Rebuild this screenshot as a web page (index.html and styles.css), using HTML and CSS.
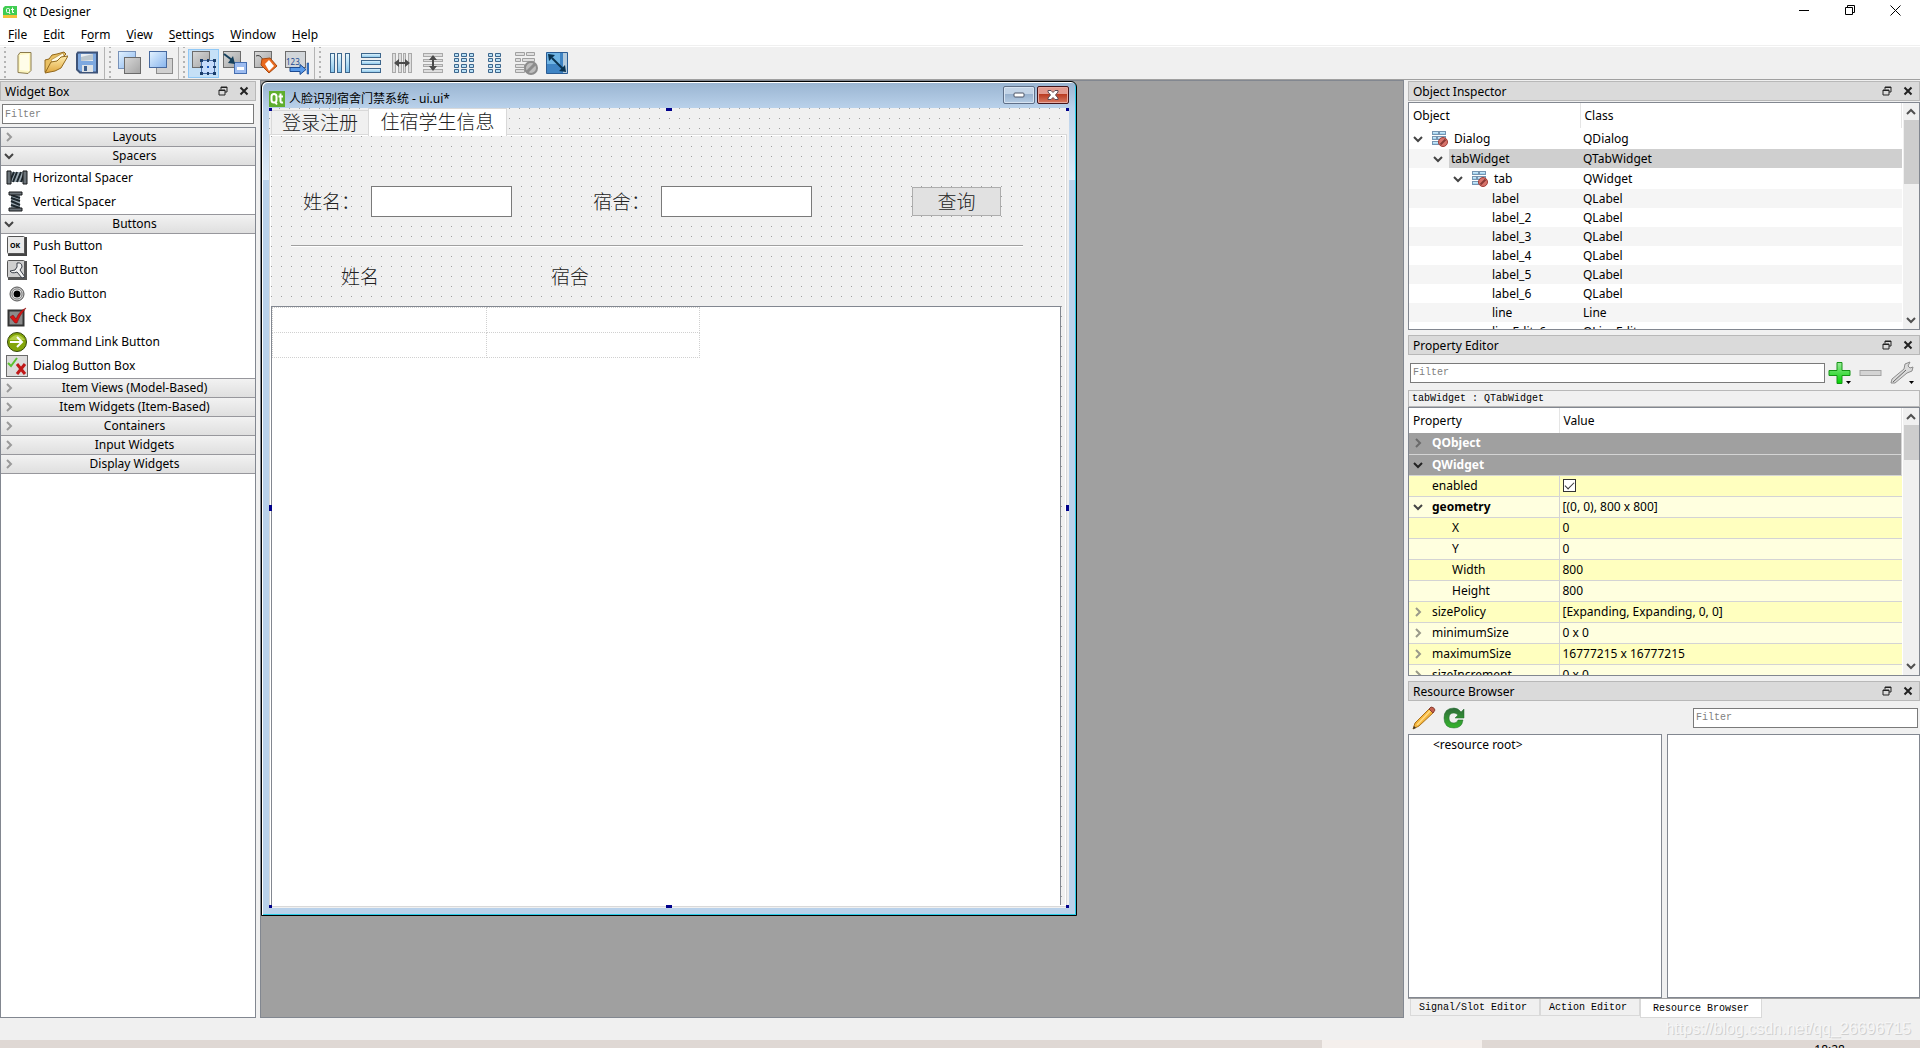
FILE: index.html
```html
<!DOCTYPE html>
<html lang="en">

<head>
    <meta charset="UTF-8">
    <meta name="viewport" content="width=device-width, initial-scale=1.0">
    <title>Qt Designer</title>
    <link rel="stylesheet" href="styles.css">
</head>

<body>
    <!-- shared shapes -->
    <svg class="defs" width="0" height="0">
        <defs>
            <linearGradient id="gBlue" x1="0" y1="0" x2="1" y2="1">
                <stop offset="0" stop-color="#e4f3ff" />
                <stop offset="1" stop-color="#86b4ee" />
            </linearGradient>
            <linearGradient id="gGray" x1="0" y1="0" x2="1" y2="1">
                <stop offset="0" stop-color="#d8d8d8" />
                <stop offset="1" stop-color="#a4a4a4" />
            </linearGradient>
            <linearGradient id="gBar" x1="0" y1="0" x2="0" y2="1">
                <stop offset="0" stop-color="#e6f8ff" />
                <stop offset="1" stop-color="#86c4ea" />
            </linearGradient>
            <linearGradient id="gGreen" x1="0" y1="0" x2="0" y2="1">
                <stop offset="0" stop-color="#9be89b" />
                <stop offset="1" stop-color="#00d400" />
            </linearGradient>
            <linearGradient id="gReload" x1="0" y1="0" x2="0" y2="1">
                <stop offset="0" stop-color="#2f6b3a" />
                <stop offset="1" stop-color="#35b52c" />
            </linearGradient>
            <linearGradient id="gFolder" x1="0" y1="0" x2="0" y2="1">
                <stop offset="0" stop-color="#ffeeb0" />
                <stop offset="1" stop-color="#e0a63c" />
            </linearGradient>
        </defs>
        <symbol id="open" viewBox="0 0 10 10">
            <path d="M1 3l4 4 4-4" fill="none" stroke="currentColor" stroke-width="2" />
        </symbol>
        <symbol id="closed" viewBox="0 0 10 10">
            <path d="M3 1l4 4-4 4" fill="none" stroke="currentColor" stroke-width="2" />
        </symbol>
        <symbol id="up" viewBox="0 0 10 10">
            <path d="M1 7l4-4 4 4" fill="none" stroke="currentColor" stroke-width="2" />
        </symbol>
        <symbol id="float" viewBox="0 0 10 10">
            <path d="M3 3.500V1h6v5H7M3 1.500h6M1 4h6v5H1zM1 4.500h6" fill="none" stroke="currentColor" />
        </symbol>
        <symbol id="cross" viewBox="0 0 10 10">
            <path d="M1.500 1.500l7 7M8.500 1.500l-7 7" fill="none" stroke="currentColor" stroke-width="2" />
        </symbol>
        <symbol id="nolayout" viewBox="0 0 16 16">
            <g fill="url(#gBar)" stroke="#7595b2">
                <rect x=".5" y=".5" width="6" height="3" />
                <rect x="7.500" y=".5" width="6" height="3" />
                <rect x=".5" y="5.500" width="4" height="3" />
                <rect x="5.500" y="5.500" width="8" height="3" />
                <rect x=".5" y="10.500" width="6" height="3" />
            </g>
            <circle cx="11" cy="11" r="4.500" fill="#d8746c" stroke="#a03c36" />
            <path d="M8.500 13.500l5-5" stroke="#8c3a36" stroke-width="2" />
        </symbol>
        <symbol id="qt" viewBox="0 0 16 16">
            <rect width="16" height="16" fill="#5fae2e" />
            <rect x="2.500" y="3" width="5" height="8.500" rx="2.500" fill="none" stroke="#fff" stroke-width="2" />
            <path d="M6 11l2 2.500M11.500 2.500v7.500q0 2 2.500 1.500M9.500 5.500h4.500" fill="none" stroke="#fff" stroke-width="2" />
        </symbol>
    </svg>

    <header class="titlebar">
        <svg width="14" height="14" viewBox="0 0 14 14">
            <path d="M2 1h12v9H0V3z" fill="#41cd52" />
            <rect y="10" width="14" height="3" fill="#f3c13a" />
            <rect x="3.500" y="3.500" width="3" height="4" rx="1" fill="none" stroke="#fff" />
            <path d="M9.500 2.500v5h1.500M8 4.500h3M6 7l1 2" fill="none" stroke="#fff" />
        </svg>
        <span class="app-name">Qt Designer</span>
        <button class="win-btn" aria-label="Minimize"><svg width="11" height="11" viewBox="0 0 11 11"><path d="M0 5.500h10" stroke="#000" /></svg></button>
        <button class="win-btn" aria-label="Restore"><svg width="11" height="11" viewBox="0 0 11 11"><path d="M.5 2.500h7v7h-7zM2.500 2.500v-2h7v7h-2" fill="none" stroke="#000" /></svg></button>
        <button class="win-btn" aria-label="Close"><svg width="11" height="11" viewBox="0 0 11 11"><path d="M.5 .5l10 10M10.500 .5l-10 10" stroke="#000" /></svg></button>
    </header>

    <nav class="menubar">
        <button><u>F</u>ile</button>
        <button><u>E</u>dit</button>
        <button>F<u>o</u>rm</button>
        <button><u>V</u>iew</button>
        <button><u>S</u>ettings</button>
        <button><u>W</u>indow</button>
        <button><u>H</u>elp</button>
    </nav>

    <div class="toolbar">
        <div class="tool-group">
            <button aria-label="New"><svg width="24" height="24" viewBox="0 0 24 24"><path d="M7 1.500h11v18l-3 3-10-1v-17z" fill="#fdf6c0" stroke="#8a7a4c" /><path d="M7 4l9-1v17l-9-1z" fill="#fffde8" /></svg></button>
            <button aria-label="Open"><svg width="24" height="24" viewBox="0 0 24 24"><path d="M1 21V9l4-1 3-4 5-1 7-2 2 2-9 9z" fill="#e9c063" stroke="#92681c" /><path d="M7 9l12-7 1 3L9 13z" fill="#fffbe4" stroke="#92681c" stroke-width=".5" /><path d="M1 22l6-11 6-1 4-4 7-1-7 12-6 3z" fill="url(#gFolder)" stroke="#92681c" /></svg></button>
            <button aria-label="Save"><svg width="24" height="24" viewBox="0 0 24 24"><path d="M3 1.500h19v20H5l-3-3V3z" fill="#7ea9e0" stroke="#3d5378" stroke-width="2" /><path d="M6 3h12v7H6z" fill="#e9eef2" /><path d="M6 6l12-3v6l-12 1z" fill="#bcc7ce" /><path d="M7 14h11v7H7z" fill="#dfe3e6" /><path d="M9 15h3v5H9z" fill="#3d5f8e" /></svg></button>
        </div>
        <div class="tool-group">
            <button aria-label="Send to Back"><svg width="24" height="24" viewBox="0 0 24 24"><rect x=".5" y=".5" width="17" height="17" fill="url(#gBlue)" stroke="#7791b8" /><rect x="6.500" y="6.500" width="16" height="16" fill="url(#gGray)" stroke="#6a6a6a" /></svg></button>
            <button aria-label="Bring to Front"><svg width="24" height="24" viewBox="0 0 24 24"><rect x="7.500" y="7.500" width="16" height="15" fill="#d0d0d0" stroke="#8c8c8c" /><rect x=".5" y=".5" width="17" height="16" fill="url(#gBlue)" stroke="#46699f" /></svg></button>
        </div>
        <div class="tool-group">
            <button class="active" aria-label="Edit Widgets"><svg width="24" height="24" viewBox="0 0 24 24"><rect x=".5" y=".5" width="17" height="16" fill="url(#gGray)" stroke="#6c6c6c" /><rect x="9.500" y="9.500" width="13" height="13" fill="#c6dcfc" stroke="#4a6ea8" /><path d="M8 8h3v3H8zM15 8h2v3h-2zM21 8h3v3h-3zM8 15h3v2H8zM21 15h3v2h-3zM8 21h3v3H8zM15 21h2v3h-2zM21 21h3v3h-3z" fill="#1b3d6b" /><path d="M15 15h2v2h-2z" fill="#1b5bc0" /></svg></button>
            <button aria-label="Edit Signals/Slots"><svg width="24" height="24" viewBox="0 0 24 24"><rect x=".5" y=".5" width="17" height="16" fill="url(#gGray)" stroke="#6c6c6c" /><rect x="11.500" y="11.500" width="12" height="11" fill="#9dbcf0" stroke="#456eb0" /><path d="M14 16h7v3h-7z" fill="#fff" /><path d="M1 3l8 6" stroke="#16405c" stroke-width="2" /><path d="M12 13l-7-1 5-7z" fill="#16405c" /></svg></button>
            <button aria-label="Edit Buddies"><svg width="24" height="24" viewBox="0 0 24 24"><rect x=".5" y=".5" width="17" height="16" fill="url(#gGray)" stroke="#6c6c6c" /><path d="M2 5q4-2 7 4" fill="none" stroke="#3a3a3a" /><path d="M8 8l8-1 7 8-8 7-8-8z" fill="#e96a1f" stroke="#a84a10" /><path d="M11 13l4-4 5 6-5 5z" fill="#fff" /></svg></button>
            <button aria-label="Edit Tab Order"><svg width="24" height="24" viewBox="0 0 24 24"><rect x=".5" y=".5" width="20" height="16" fill="#d2d6da" stroke="#6c6c6c" /><text x="1" y="14" class="num">123</text><path d="M5 16.500h10v-3l6 5-6 5v-3H5z" fill="#5a9bea" stroke="#1d4a91" /><path d="M22 12h2v11h-2z" fill="#3c79c8" stroke="#1d4a91" stroke-width=".5" /></svg></button>
        </div>
        <div class="tool-group">
            <button aria-label="Lay Out Horizontally"><svg width="22" height="22" viewBox="0 0 22 22"><g fill="url(#gBar)" stroke="#3d668c"><rect x="1.500" y="1.500" width="4" height="19" /><rect x="8.500" y="1.500" width="4" height="19" /><rect x="16.500" y="1.500" width="4" height="19" /></g></svg></button>
            <button aria-label="Lay Out Vertically"><svg width="22" height="22" viewBox="0 0 22 22"><g fill="url(#gBar)" stroke="#3d668c"><rect x="1.500" y="1.500" width="19" height="4" /><rect x="1.500" y="8.500" width="19" height="4" /><rect x="1.500" y="16.500" width="19" height="4" /></g></svg></button>
            <button aria-label="Horizontal Splitter"><svg width="22" height="22" viewBox="0 0 22 22"><g fill="#dedede" stroke="#a9a9a9"><rect x="1.500" y="1.500" width="3" height="19" /><rect x="7.500" y="1.500" width="3" height="19" /><rect x="12.500" y="1.500" width="2" height="19" /><rect x="17.500" y="1.500" width="3" height="19" /></g><path d="M3 11l5-4v3h6V7l5 4-5 4v-3H8v3z" fill="#4a4a4a" /></svg></button>
            <button aria-label="Vertical Splitter"><svg width="22" height="22" viewBox="0 0 22 22"><g fill="#dedede" stroke="#a9a9a9"><rect x="1.500" y="1.500" width="19" height="3" /><rect x="1.500" y="7.500" width="19" height="2" /><rect x="1.500" y="12.500" width="19" height="2" /><rect x="1.500" y="17.500" width="19" height="3" /></g><path d="M11 3l4 5h-3v6h3l-4 5-4-5h3V8H7z" fill="#4a4a4a" /></svg></button>
            <button aria-label="Lay Out in a Grid"><svg width="22" height="22" viewBox="0 0 22 22"><path d="M1.500 1.500h4v3h-4zM8.500 1.500h5v3h-5zM16.500 1.500h4v3h-4zM1.500 6.500h4v3h-4zM8.500 6.500h5v3h-5zM16.500 6.500h4v3h-4zM1.500 12.500h4v3h-4zM8.500 12.500h5v3h-5zM16.500 12.500h4v3h-4zM1.500 17.500h4v3h-4zM8.500 17.500h5v3h-5zM16.500 17.500h4v3h-4z" fill="#b8e0f6" stroke="#3d668c" /></svg></button>
            <button aria-label="Lay Out in a Form"><svg width="22" height="22" viewBox="0 0 22 22"><path d="M4.500 1.500h4v3h-4zM11.500 1.500h5v3h-5zM4.500 6.500h4v3h-4zM11.500 6.500h5v3h-5zM4.500 12.500h4v3h-4zM11.500 12.500h5v3h-5zM4.500 17.500h4v3h-4zM11.500 17.500h5v3h-5z" fill="#b8e0f6" stroke="#3d668c" /></svg></button>
            <button aria-label="Break Layout"><svg width="24" height="24" viewBox="0 0 24 24"><path d="M1.500 1.500h9v3h-9zM12.500 1.500h8v3h-8zM1.500 7.500h5v3h-5zM8.500 7.500h12v3h-12zM1.500 13.500h9v3h-9zM1.500 18.500h9v3h-9z" fill="#dedede" stroke="#a0a0a0" /><circle cx="17" cy="17" r="6" fill="#bdbdbd" stroke="#8c8c8c" stroke-width="2" /><path d="M13 21l8-8" stroke="#8c8c8c" stroke-width="3" /></svg></button>
            <button aria-label="Adjust Size"><svg width="24" height="24" viewBox="0 0 24 24"><path d="M1.500 1.500h21v21h-21z" fill="#3f84c4" stroke="#2a5c94" /><path d="M2 2h13v11H2z" fill="#6fb4e4" /><path d="M18 2h4v20h-4z" fill="#b4cbdd" /><path d="M7 7l11 11" stroke="#0a3350" stroke-width="2" /><path d="M3 3l7 1-6 6zM21 21l-7-1 6-6z" fill="#0a3350" /></svg></button>
        </div>
    </div>

    <main class="workspace">
        <aside class="widget-box">
            <div class="dock-title">
                <h2>Widget Box</h2>
                <button aria-label="Float"><svg width="10" height="10"><use href="#float" /></svg></button>
                <button aria-label="Close"><svg width="10" height="10"><use href="#cross" /></svg></button>
            </div>
            <input class="filter" type="text" placeholder="Filter" aria-label="Filter widgets">
            <div class="categories">
                <button class="category"><svg width="10" height="10"><use href="#closed" /></svg>Layouts</button>
                <button class="category is-open"><svg width="10" height="10"><use href="#open" /></svg>Spacers</button>
                <ul class="widgets">
                    <li><svg width="22" height="22" viewBox="0 0 22 22"><path d="M4 5h14v10H4z" fill="#9aa7b0" /><path d="M4 14l4-9M7 15l4-10M11 15l4-10M15 15l3-8" stroke="#1c262c" stroke-width="2" /><path d="M1 4h4v13H1zM17 4h4v13h-4z" fill="#6a7278" stroke="#16191b" /></svg>Horizontal Spacer</li>
                    <li><svg width="22" height="22" viewBox="0 0 22 22"><path d="M5 4h9v14H5z" fill="#9aa7b0" /><path d="M5 7l9 3M5 10l9 4M5 14l9 3M5 4l9 3" stroke="#1c262c" stroke-width="2" /><path d="M3 1h13v3H3zM3 17h13v3H3z" fill="#6a7278" stroke="#16191b" /></svg>Vertical Spacer</li>
                </ul>
                <button class="category is-open"><svg width="10" height="10"><use href="#open" /></svg>Buttons</button>
                <ul class="widgets">
                    <li><svg width="22" height="22" viewBox="0 0 22 22"><rect x="2" y="2" width="19" height="19" fill="#444" /><rect x="1.500" y="1.500" width="17" height="17" rx="1" fill="#e9e9e9" stroke="#555" /><text x="4" y="13" class="ok">OK</text></svg>Push Button</li>
                    <li><svg width="22" height="22" viewBox="0 0 22 22"><rect x="2" y="2" width="19" height="19" fill="#555" /><rect x="1.500" y="1.500" width="17" height="17" rx="1" fill="#cfcfcf" stroke="#555" /><path d="M11 4q5-1 5 4l-2 3 5 7-3 1-5-6q-5 2-7-1l5-1 2-3z" fill="#f1f1f1" stroke="#3a3f48" /></svg>Tool Button</li>
                    <li><svg width="22" height="22" viewBox="0 0 22 22"><circle cx="11" cy="11" r="7" fill="#c9c9c9" stroke="#555" stroke-width="1" /><circle cx="11" cy="11" r="5" fill="#fff" stroke="#777" /><circle cx="11" cy="11" r="3.500" fill="#000" /></svg>Radio Button</li>
                    <li><svg width="22" height="22" viewBox="0 0 22 22"><rect x="2.500" y="3.500" width="15" height="15" fill="#8b8b8b" stroke="#333" stroke-width="2" /><path d="M4 10l3-2 3 4q3-8 10-11-7 8-9 15H9z" fill="#d81414" stroke="#7b0808" stroke-width=".5" /></svg>Check Box</li>
                    <li><svg width="22" height="22" viewBox="0 0 22 22"><circle cx="11" cy="11" r="9.500" fill="#83a50a" stroke="#35470b" /><path d="M3 9q8-10 16 0z" fill="#b6cf4a" /><path d="M4 11h11M11 6l5 5-5 5" fill="none" stroke="#fff" stroke-width="2" /></svg>Command Link Button</li>
                    <li><svg width="22" height="22" viewBox="0 0 22 22"><rect x=".5" y=".5" width="21" height="21" fill="#dcdcdc" stroke="#6b6b6b" /><path d="M2 8l3 3 6-8" fill="none" stroke="#5bc02e" stroke-width="2" /><path d="M11 9l8 10M19 9l-8 10" stroke="#c01818" stroke-width="3" /></svg>Dialog Button Box</li>
                </ul>
                <button class="category"><svg width="10" height="10"><use href="#closed" /></svg>Item Views (Model-Based)</button>
                <button class="category"><svg width="10" height="10"><use href="#closed" /></svg>Item Widgets (Item-Based)</button>
                <button class="category"><svg width="10" height="10"><use href="#closed" /></svg>Containers</button>
                <button class="category"><svg width="10" height="10"><use href="#closed" /></svg>Input Widgets</button>
                <button class="category"><svg width="10" height="10"><use href="#closed" /></svg>Display Widgets</button>
            </div>
        </aside>

        <section class="mdi">
            <div class="form-window">
                <div class="form-title">
                    <svg width="16" height="16"><use href="#qt" /></svg>
                    <span>人脸识别宿舍门禁系统 - ui.ui*</span>
                    <button class="mdi-btn" aria-label="Minimize form"><svg width="12" height="6" viewBox="0 0 12 6"><rect x="1" y="1" width="10" height="4" rx="1" fill="#fff" stroke="#4c5566" /></svg></button>
                    <button class="mdi-btn mdi-close" aria-label="Close form"><svg width="12" height="10" viewBox="0 0 12 10"><path d="M1 .5h3l2 2 2-2h3v1.500L8.500 5 11 8v1.500H8l-2-2-2 2H1V8l2.500-3L1 2z" fill="#fff" stroke="#5b4a55" /></svg></button>
                </div>
                <div class="dialog">
                    <div class="tabs">
                        <button class="tab">登录注册</button>
                        <button class="tab current">住宿学生信息</button>
                    </div>
                    <div class="pane">
                        <div class="page">
                            <div class="search-row">
                                <label for="nameEdit">姓名：</label>
                                <input id="nameEdit" class="name-edit" type="text">
                                <label for="dormEdit">宿舍：</label>
                                <input id="dormEdit" class="dorm-edit" type="text">
                                <button class="query">查询</button>
                            </div>
                            <hr class="line">
                            <div class="heads">
                                <span>姓名</span>
                                <span>宿舍</span>
                            </div>
                            <div class="table-widget">
                                <table class="cells">
                                    <tr><td></td><td></td></tr>
                                    <tr><td></td><td></td></tr>
                                </table>
                            </div>
                        </div>
                    </div>
                    <i class="grip top left"></i>
                    <i class="grip top mid"></i>
                    <i class="grip top right"></i>
                    <i class="grip center left"></i>
                    <i class="grip center right"></i>
                    <i class="grip bottom left"></i>
                    <i class="grip bottom mid"></i>
                    <i class="grip bottom right"></i>
                </div>
            </div>
        </section>

        <aside class="side">
            <div class="dock-title">
                <h2>Object Inspector</h2>
                <button aria-label="Float"><svg width="10" height="10"><use href="#float" /></svg></button>
                <button aria-label="Close"><svg width="10" height="10"><use href="#cross" /></svg></button>
            </div>
            <div class="view inspector">
                <div class="scroll-area">
                    <table class="objects">
                        <thead>
                            <tr><th class="first">Object</th><th>Class</th></tr>
                        </thead>
                        <tbody>
                            <tr class="tall"><td><div class="node"><svg class="arrow" width="10" height="10"><use href="#open" /></svg><svg class="kind" width="16" height="16"><use href="#nolayout" /></svg>Dialog</div></td><td>QDialog</td></tr>
                            <tr class="selected"><td><div class="node depth-1"><svg class="arrow" width="10" height="10"><use href="#open" /></svg><span class="name">tabWidget</span></div></td><td>QTabWidget</td></tr>
                            <tr class="tall"><td><div class="node depth-2"><svg class="arrow" width="10" height="10"><use href="#open" /></svg><svg class="kind" width="16" height="16"><use href="#nolayout" /></svg>tab</div></td><td>QWidget</td></tr>
                            <tr class="alt"><td class="leaf">label</td><td>QLabel</td></tr>
                            <tr><td class="leaf">label_2</td><td>QLabel</td></tr>
                            <tr class="alt"><td class="leaf">label_3</td><td>QLabel</td></tr>
                            <tr><td class="leaf">label_4</td><td>QLabel</td></tr>
                            <tr class="alt"><td class="leaf">label_5</td><td>QLabel</td></tr>
                            <tr><td class="leaf">label_6</td><td>QLabel</td></tr>
                            <tr class="alt"><td class="leaf">line</td><td>Line</td></tr>
                            <tr><td class="leaf">lineEdit_6</td><td>QLineEdit</td></tr>
                        </tbody>
                    </table>
                </div>
                <div class="scrollbar">
                    <svg width="10" height="10"><use href="#up" /></svg>
                    <div class="thumb"></div>
                    <svg width="10" height="10"><use href="#open" /></svg>
                </div>
            </div>

            <div class="dock-title spaced">
                <h2>Property Editor</h2>
                <button aria-label="Float"><svg width="10" height="10"><use href="#float" /></svg></button>
                <button aria-label="Close"><svg width="10" height="10"><use href="#cross" /></svg></button>
            </div>
            <div class="property-tools">
                <input class="filter" type="text" placeholder="Filter" aria-label="Filter properties">
                <button aria-label="Add Dynamic Property"><svg width="24" height="24" viewBox="0 0 24 24"><path d="M9 1.500h5v8h8v5h-8v8H9v-8H1v-5h8z" fill="url(#gGreen)" stroke="#149414" /><path d="M18 20h5l-2.500 3z" fill="#000" /></svg></button>
                <button aria-label="Remove Dynamic Property"><svg width="24" height="24" viewBox="0 0 24 24"><rect x="1" y="9.500" width="21" height="5" fill="#d4d4d4" stroke="#a3a3a3" /></svg></button>
                <button aria-label="Configure Property Editor"><svg width="24" height="24" viewBox="0 0 24 24"><path d="M1 22l1-4L14 8l1-5 5-2-2 4 2 2 3-1-1 4-5 2L5 22z" fill="#dadada" stroke="#8c8c8c" /><path d="M3 21L16 9" stroke="#666" /><path d="M19 20h5l-2.500 3z" fill="#000" /></svg></button>
            </div>
            <p class="object-name">tabWidget : QTabWidget</p>
            <div class="view properties-view">
                <div class="scroll-area">
                    <table class="properties">
                        <thead>
                            <tr><th class="first">Property</th><th>Value</th></tr>
                        </thead>
                        <tbody>
                            <tr class="group"><td colspan="2"><svg class="arrow" width="10" height="10"><use href="#closed" /></svg>QObject</td></tr>
                            <tr class="group"><td colspan="2"><svg class="arrow is-open" width="10" height="10"><use href="#open" /></svg>QWidget</td></tr>
                            <tr class="deep"><td class="plain"><label for="enabled">enabled</label></td><td><input id="enabled" class="check" type="checkbox" checked></td></tr>
                            <tr><td class="changed"><svg class="arrow is-open" width="10" height="10"><use href="#open" /></svg>geometry</td><td>[(0, 0), 800 x 800]</td></tr>
                            <tr class="deep"><td class="sub">X</td><td>0</td></tr>
                            <tr><td class="sub">Y</td><td>0</td></tr>
                            <tr class="deep"><td class="sub">Width</td><td>800</td></tr>
                            <tr><td class="sub">Height</td><td>800</td></tr>
                            <tr class="deep"><td><svg class="arrow" width="10" height="10"><use href="#closed" /></svg>sizePolicy</td><td>[Expanding, Expanding, 0, 0]</td></tr>
                            <tr><td><svg class="arrow" width="10" height="10"><use href="#closed" /></svg>minimumSize</td><td>0 x 0</td></tr>
                            <tr class="deep"><td><svg class="arrow" width="10" height="10"><use href="#closed" /></svg>maximumSize</td><td>16777215 x 16777215</td></tr>
                            <tr><td><svg class="arrow" width="10" height="10"><use href="#closed" /></svg>sizeIncrement</td><td>0 x 0</td></tr>
                        </tbody>
                    </table>
                </div>
                <div class="scrollbar">
                    <svg width="10" height="10"><use href="#up" /></svg>
                    <div class="thumb short"></div>
                    <svg width="10" height="10"><use href="#open" /></svg>
                </div>
            </div>

            <div class="dock-title spaced">
                <h2>Resource Browser</h2>
                <button aria-label="Float"><svg width="10" height="10"><use href="#float" /></svg></button>
                <button aria-label="Close"><svg width="10" height="10"><use href="#cross" /></svg></button>
            </div>
            <div class="resource-tools">
                <button aria-label="Edit Resources"><svg width="24" height="24" viewBox="0 0 24 24"><path d="M1 23l2-6L18 2l4 4L7 20z" fill="#f5b63c" stroke="#a8701c" /><path d="M5 19L19 4" stroke="#ffdc86" stroke-width="1.500" /><path d="M17 3l2-2q3 0 4 3l-2 3z" fill="#c4604e" stroke="#8b3f32" /><path d="M1 23l1-3 2 2z" fill="#333" /></svg></button>
                <button aria-label="Reload"><svg width="22" height="22" viewBox="0 0 22 22"><path d="M21 2v9h-9l3-3q-2-2-4-2-5 0-5 5t5 5q3 0 4-3h5q-1 8-9 8-10 0-10-10T11 1q4 0 7 4z" fill="url(#gReload)" stroke="#1f6a2a" stroke-width=".5" /></svg></button>
                <input class="filter" type="text" placeholder="Filter" aria-label="Filter resources">
            </div>
            <div class="resource-panes">
                <div class="resource-tree">&lt;resource root&gt;</div>
                <div class="resource-list"></div>
            </div>
            <div class="dock-tabs">
                <button>Signal/Slot Editor</button>
                <button>Action Editor</button>
                <button class="current">Resource Browser</button>
            </div>
        </aside>
    </main>

    <footer class="statusbar"><span class="watermark">https://blog.csdn.net/qq_26696715</span></footer>
    <div class="taskbar"><div class="task"></div><span class="clock">18:28</span></div>
</body>

</html>
```

FILE: styles.css
```css
* {
    box-sizing: border-box;
}

body {
    margin: 0;
    height: 100vh;
    display: flex;
    flex-direction: column;
    overflow: hidden;
    background-color: #f0f0f0;
    color: #000;
    font-family: "Noto Sans", "Noto Sans CJK SC", sans-serif;
    font-size: 12px;
    line-height: 18px;
}

button {
    padding: 0;
    border: 0;
    background: none;
    color: inherit;
    font: inherit;
}

svg {
    display: block;
    flex: none;
}

input {
    border: 1px solid #7a7a7a;
    background-color: #fff;
}

table {
    border-collapse: collapse;
    table-layout: fixed;
}

.defs {
    position: absolute;
}

/* title bar and menu */
.titlebar {
    height: 24px;
    padding: 0 3px;
    display: flex;
    align-items: center;
    background-color: #fff;
}

.app-name {
    flex: 1;
    padding-left: 6px;
}

.win-btn {
    width: 46px;
    height: 20px;
    display: flex;
    align-items: flex-start;
    justify-content: center;
    padding-top: 3px;
}

.win-btn:last-child {
    width: 44px;
}

.menubar {
    height: 22px;
    padding-left: 8px;
    display: flex;
    gap: 16px;
    background-color: #fff;
    border-bottom: 1px solid #f0f0f0;
}

.menubar u {
    text-underline-offset: 2px;
}

/* toolbar */
.toolbar {
    height: 34px;
    display: flex;
    border-top: 1px solid #fff;
    border-bottom: 1px solid #a0a0a0;
}

.tool-group {
    display: flex;
    align-items: center;
    padding: 0 2px 0 9px;
    border-right: 1px solid #b4b4b4;
    background: linear-gradient(#b4b4b4 2px, transparent 2px) 4px 4px / 2px 5px repeat-y;
}

.tool-group:last-child {
    border-right: 0;
}

.tool-group button {
    width: 31px;
    height: 29px;
    display: flex;
    align-items: center;
    justify-content: center;
}

.tool-group .active {
    background-color: #c5e0f7;
    border: 1px solid #90c8f6;
}

.num {
    font: 8px "Noto Sans", sans-serif;
    fill: #1d4a91;
}

.ok {
    font: bold 7px "Noto Sans", sans-serif;
}

/* docks */
.workspace {
    flex: 1;
    min-height: 0;
    display: flex;
    gap: 4px;
}

.dock-title {
    height: 20px;
    margin-top: 1px;
    padding: 0 6px 0 4px;
    flex: none;
    display: flex;
    align-items: center;
    gap: 11px;
    background-color: #dadada;
    border: 1px solid #b8b8b8;
    color: #222;
}

.dock-title.spaced {
    margin-top: 5px;
}

.dock-title h2 {
    flex: 1;
    margin: 0;
    padding-top: 2px;
    font-size: 12px;
    font-weight: normal;
    color: #000;
}

.filter {
    height: 20px;
    padding: 0 2px;
    font-family: "Liberation Mono", monospace;
    font-size: 10px;
}

.filter::placeholder {
    color: #808080;
}

.widget-box {
    width: 256px;
    display: flex;
    flex-direction: column;
}

.widget-box .filter {
    margin: 3px 2px;
}

.categories {
    flex: 1;
    background-color: #fff;
    border: 1px solid #828790;
}

.category {
    width: 100%;
    height: 19px;
    padding-left: 3px;
    display: flex;
    align-items: center;
    justify-content: center;
    background: linear-gradient(#f2f2f2, #dfdfdf);
    border-bottom: 1px solid #97979c;
}

.category svg {
    margin-right: auto;
    color: #9a9a9a;
}

.category::after {
    content: "";
    margin-left: auto;
}

.category.is-open svg {
    color: #444;
}

.widgets {
    margin: 0;
    padding: 0 0 0 5px;
    list-style: none;
    border-bottom: 1px solid #97979c;
}

.widgets li {
    height: 24px;
    display: flex;
    align-items: center;
    gap: 5px;
}

/* form being edited */
.mdi {
    flex: 1;
    min-width: 0;
    overflow: hidden;
    background-color: #a0a0a0;
    border: 1px solid #828790;
}

.form-window {
    width: 816px;
    border: 1px solid #000;
    border-radius: 6px 6px 0 0;
    padding: 0 7px 7px;
    background: linear-gradient(#99b4d1, #b9d1ea 26px, #dfebf8 98px, #b9d1ea 98px);
    box-shadow: inset 1px 1px #fff, inset -1px -1px #28cbe6;
}

.form-title {
    height: 26px;
    display: flex;
    align-items: center;
    gap: 2px;
}

.form-title > svg {
    margin-top: 8px;
}

.form-title span {
    flex: 1;
    padding: 8px 0 0 2px;
}

.mdi-btn {
    width: 32px;
    height: 18px;
    display: flex;
    align-items: center;
    justify-content: center;
    border: 1px solid #5f6f88;
    border-radius: 2px;
    background: linear-gradient(#c3d4e7 45%, #98b1ce 45%, #b5cce4);
    box-shadow: inset 0 0 0 1px #d7e4f2;
}

.mdi-close {
    border-color: #43141a;
    background: linear-gradient(#e29a8f 45%, #b93a20 45%, #d77a62);
    box-shadow: inset 0 0 0 1px #e8aaa0;
}

.dialog {
    position: relative;
    height: 800px;
    display: flex;
    flex-direction: column;
    padding: 0 2px 1px 0;
}

.dialog,
.page {
    background: linear-gradient(90deg, transparent 1px, #f0f0f0 1px), linear-gradient(#a0a0a0 1px, #f0f0f0 1px);
    background-size: 10px 10px;
}

.dialog,
.tab {
    font-size: 19px;
    font-weight: 300;
    line-height: 24px;
    color: #222;
}

.tabs {
    height: 26px;
    padding-left: 2px;
    display: flex;
    align-items: flex-end;
}

.tab {
    height: 24px;
    width: 97px;
    background-color: #f0f0f0;
    border: 1px solid #d9d9d9;
    border-width: 1px 0 0 1px;
}

.tab.current {
    position: relative;
    width: 139px;
    height: 28px;
    margin-bottom: -2px;
    padding-bottom: 2px;
    background-color: #fff;
    border-width: 1px;
    border-bottom: 0;
}

.pane {
    flex: 1;
    min-height: 0;
    padding: 1px;
    background-color: #fff;
    border: 1px solid #d9d9d9;
}

.page {
    height: 100%;
    display: flex;
    flex-direction: column;
    padding-top: 50px;
    overflow: hidden;
}

.search-row {
    height: 31px;
    padding-left: 32px;
    display: flex;
    align-items: center;
}

.search-row label {
    width: 68px;
}

.name-edit {
    width: 141px;
    height: 31px;
    margin-right: 81px;
}

.dorm-edit {
    width: 151px;
    height: 31px;
    margin-right: 100px;
}

.query {
    width: 89px;
    height: 29px;
    background-color: #e1e1e1;
    border: 1px solid #adadad;
}

.line {
    height: 2px;
    margin: 28px 42px 0 20px;
    border: 0;
    border-top: 1px solid #a0a0a0;
    background-color: #fff;
}

.heads {
    height: 59px;
    padding-left: 70px;
    display: grid;
    grid-template-columns: 210px 210px;
    align-items: center;
}

.table-widget {
    flex: 1;
    margin-right: 4px;
    background-color: #fff;
    border: 1px solid #828790;
    border-bottom: 0;
}

.cells {
    width: 428px;
}

.cells td {
    height: 25px;
    border: 1px dotted #d0d0d0;
}

/* selection handles */
.grip {
    position: absolute;
    width: 3px;
    height: 3px;
    background-color: #00008b;
}

.grip.top {
    top: 0;
}

.grip.bottom {
    bottom: 0;
}

.grip.left {
    left: 0;
}

.grip.right {
    right: 0;
}

.grip.mid {
    left: 397px;
    width: 6px;
}

.grip.center {
    top: 397px;
    height: 6px;
}

/* right side */
.side {
    width: 512px;
    display: flex;
    flex-direction: column;
}

.view {
    display: flex;
    flex: none;
    background-color: #fff;
    border: 1px solid #828790;
}

.inspector {
    height: 228px;
    margin-top: 1px;
}

.properties-view {
    height: 269px;
}

.scroll-area {
    flex: 1;
    overflow: hidden;
}

.scroll-area table {
    width: 100%;
}

.scroll-area th {
    height: 25px;
    padding: 0 4px;
    font-weight: normal;
    text-align: left;
    border-right: 1px solid #e5e5e5;
}

.scroll-area td {
    padding: 0 0 0 3px;
    white-space: nowrap;
}

.objects .first {
    width: 171px;
}

.objects td {
    height: 19px;
}

.objects .tall td {
    height: 21px;
}

.objects td:first-child {
    padding-left: 4px;
}

.objects td:first-child.leaf {
    padding-left: 83px;
}

.objects .alt {
    background-color: #f5f5f5;
}

.objects .selected {
    background: linear-gradient(90deg, #f5f5f5 40px, #cfcfcf 40px);
}

.node {
    display: flex;
    align-items: center;
}

.node .kind {
    margin: 0 6px 0 9px;
}

.node .name {
    padding-left: 8px;
}

.depth-1 {
    padding-left: 20px;
}

.depth-2 {
    padding-left: 40px;
}

.arrow {
    color: #444;
}

.scrollbar {
    width: 17px;
    padding: 4px 0;
    display: flex;
    flex-direction: column;
    align-items: center;
    background-color: #f0f0f0;
    border-left: 1px solid #fff;
    color: #505050;
}

.thumb {
    width: 15px;
    height: 64px;
    margin: 3px 0 auto;
    background-color: #cdcdcd;
}

.thumb.short {
    height: 35px;
}

.property-tools {
    height: 35px;
    padding: 0 6px 0 2px;
    display: flex;
    align-items: center;
    gap: 7px;
}

.property-tools .filter {
    flex: 1;
    margin-right: -4px;
}

.object-name {
    height: 17px;
    margin: 0;
    padding-left: 3px;
    border: 1px solid #b8b8b8;
    font-family: "Liberation Mono", monospace;
    font-size: 10px;
    line-height: 16px;
}

.properties .first {
    width: 150px;
}

.properties td {
    height: 21px;
    background-color: #ffffdf;
    border-bottom: 1px solid #d4d4d4;
}

.properties .deep td {
    background-color: #ffffbf;
}

.properties td:first-child {
    padding-left: 23px;
    border-right: 1px solid #d4d4d4;
}

.properties td:first-child.sub {
    padding-left: 43px;
}

.properties .arrow {
    float: left;
    margin: 4px 0 0 -19px;
    color: #9a9a8a;
}

.properties .arrow.is-open {
    color: #444;
}

.properties .group td {
    background-color: #a0a0a0;
    color: #fff;
    font-weight: bold;
}

.properties .group .arrow {
    color: #6a6a6a;
}

.properties .group .arrow.is-open {
    color: #222;
}

.properties .changed {
    font-weight: bold;
}

.check {
    appearance: none;
    display: block;
    width: 13px;
    height: 13px;
    margin: 0;
    border: 1px solid #333;
}

.check:checked::before {
    content: "";
    display: block;
    width: 8px;
    height: 4px;
    margin: 2px 1px;
    border: solid #333;
    border-width: 0 0 1px 1px;
    transform: rotate(-45deg);
}

.resource-tools {
    height: 33px;
    padding: 0 2px 0 4px;
    display: flex;
    align-items: center;
    gap: 7px;
}

.resource-tools .filter {
    width: 225px;
    margin-left: auto;
}

.resource-panes {
    flex: 1;
    display: flex;
    gap: 5px;
}

.resource-tree,
.resource-list {
    flex: 1;
    padding: 1px 24px;
    background-color: #fff;
    border: 1px solid #828790;
}

.dock-tabs {
    height: 20px;
    padding-left: 2px;
    display: flex;
    align-items: flex-start;
    border-top: 1px solid #a0a0a0;
    font-family: "Liberation Mono", monospace;
    font-size: 10px;
}

.dock-tabs button {
    height: 17px;
    padding: 0 12px 0 8px;
    border: 1px solid #d9d9d9;
    border-top: 0;
}

.dock-tabs .current {
    height: 19px;
    padding: 1px 12px 0;
    background-color: #fff;
}

.statusbar {
    height: 22px;
    padding-right: 9px;
    text-align: right;
}

.watermark {
    color: #f6f6f6;
    font-family: "Liberation Sans", sans-serif;
    font-size: 16px;
    line-height: 22px;
    text-shadow: 1px 1px #cfcfcf;
}

.taskbar {
    height: 8px;
    padding-right: 75px;
    display: flex;
    justify-content: flex-end;
    overflow: hidden;
    background-color: #dfd8d4;
}

.task {
    width: 160px;
    margin-right: 332px;
    background-color: #f4efec;
}

.clock {
    padding-top: 1px;
}
```
